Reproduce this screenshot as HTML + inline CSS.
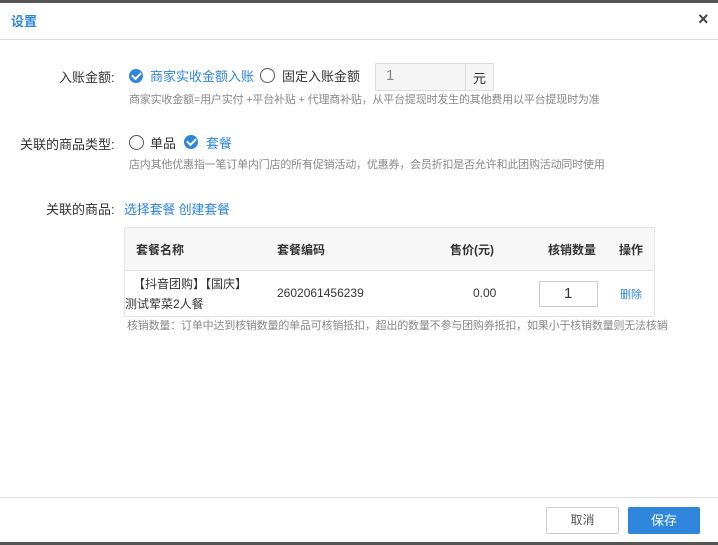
<!DOCTYPE html>
<html><head><meta charset="utf-8"><style>
*{margin:0;padding:0;box-sizing:border-box}
body{width:718px;height:545px;position:relative;background:#fff;font-family:"Liberation Sans","Noto Sans CJK SC",sans-serif;font-size:12px;color:#333;overflow:hidden}
.a{position:absolute;white-space:nowrap}
.chk{position:absolute;width:14px;height:14px;border-radius:50%;background:#2f86dd}
.chk:after{content:"";position:absolute;left:3px;top:3px;width:7px;height:4px;border-left:2px solid #fff;border-bottom:2px solid #fff;transform:rotate(-45deg)}
.rad{position:absolute;width:15px;height:15px;border-radius:50%;border:1px solid #555;background:#fff}
.blue{color:#2f86dd}
.hint{color:#888;font-size:11px;letter-spacing:-0.19px}
</style></head><body>
<div class="a" style="left:0;top:0;width:718px;height:3px;background:#555"></div>
<div class="a" style="left:0;top:542px;width:718px;height:3px;background:#555"></div>
<div class="a blue" style="left:11px;top:11px;font-size:13px;font-weight:bold">设置</div>
<div class="a" style="left:698px;top:9px;font-size:18px;font-weight:bold;color:#444">×</div>
<div class="a" style="left:0;top:39px;width:718px;height:1px;background:#ddd"></div>

<div class="a" style="left:59px;top:67px;font-size:13px">入账金额:</div>
<div class="chk" style="left:129px;top:69px"></div>
<div class="a blue" style="left:150px;top:66px;font-size:13px">商家实收金额入账</div>
<div class="rad" style="left:260px;top:68px"></div>
<div class="a" style="left:282px;top:66px;font-size:13px">固定入账金额</div>
<div class="a" style="left:375px;top:63px;width:119px;height:28px;border:1px solid #ddd;background:#f5f5f5"></div>
<div class="a" style="left:465px;top:63px;width:1px;height:28px;background:#ddd"></div>
<div class="a" style="left:386px;top:67px;font-size:15px;color:#888">1</div>
<div class="a" style="left:473px;top:68px;font-size:13px">元</div>
<div class="a hint" style="left:129px;top:91px">商家实收金额=用户实付 +平台补贴 + 代理商补贴，从平台提现时发生的其他费用以平台提现时为准</div>

<div class="a" style="left:20px;top:134px;font-size:13px">关联的商品类型:</div>
<div class="rad" style="left:129px;top:135px"></div>
<div class="a" style="left:150px;top:133px;font-size:13px">单品</div>
<div class="chk" style="left:184px;top:135px"></div>
<div class="a blue" style="left:206px;top:133px;font-size:13px">套餐</div>
<div class="a hint" style="left:129px;top:156px">店内其他优惠指一笔订单内门店的所有促销活动，优惠券，会员折扣是否允许和此团购活动同时使用</div>

<div class="a" style="left:46px;top:199px;font-size:13px">关联的商品:</div>
<div class="a blue" style="left:124px;top:199px;font-size:13px;letter-spacing:-0.2px">选择套餐 创建套餐</div>

<div class="a" style="left:124px;top:227px;width:531px;height:90px;border:1px solid #e5e5e5"></div>
<div class="a" style="left:125px;top:228px;width:529px;height:43px;background:#f7f7f7;border-bottom:1px solid #e5e5e5"></div>
<div class="a" style="left:136px;top:241px;font-weight:bold">套餐名称</div>
<div class="a" style="left:277px;top:241px;font-weight:bold">套餐编码</div>
<div class="a" style="left:450px;top:241px;font-weight:bold">售价(元)</div>
<div class="a" style="left:548px;top:241px;font-weight:bold">核销数量</div>
<div class="a" style="left:619px;top:241px;font-weight:bold">操作</div>
<div class="a" style="left:133px;top:275px">【抖音团购】【国庆】</div>
<div class="a" style="left:125px;top:295px">测试荤菜2人餐</div>
<div class="a" style="left:277px;top:286px">2602061456239</div>
<div class="a" style="left:473px;top:286px">0.00</div>
<div class="a" style="left:539px;top:281px;width:59px;height:26px;border:1px solid #ccc;background:#fff"></div>
<div class="a" style="left:564px;top:285px;font-size:15px">1</div>
<div class="a blue" style="left:620px;top:286px;font-size:11px">删除</div>
<div class="a hint" style="left:127px;top:317px">核销数量：订单中达到核销数量的单品可核销抵扣，超出的数量不参与团购券抵扣，如果小于核销数量则无法核销</div>

<div class="a" style="left:0;top:497px;width:718px;height:1px;background:#ddd"></div>
<div class="a" style="left:546px;top:507px;width:73px;height:27px;border:1px solid #ccc;border-radius:2px;text-align:center;line-height:25px;color:#555">取消</div>
<div class="a" style="left:628px;top:507px;width:72px;height:27px;background:#2f86dd;border-radius:2px;text-align:center;line-height:27px;color:#fff;font-size:13px">保存</div>
</body></html>
